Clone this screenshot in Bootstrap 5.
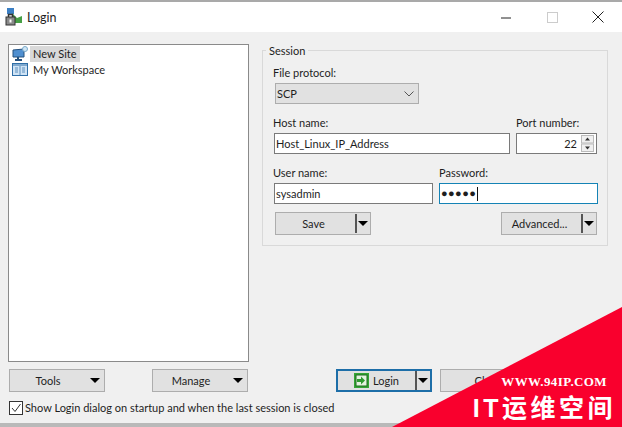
<!DOCTYPE html>
<html lang="en">
<head>
<meta charset="utf-8">
<title>Login</title>
<link href="https://cdn.jsdelivr.net/npm/bootstrap@5.3.0/dist/css/bootstrap.min.css" rel="stylesheet">
<style>
html,body{margin:0;width:622px;height:427px;overflow:hidden;background:#b9b9b9}
body{font-family:"Lato","Liberation Sans",sans-serif;font-size:11px;line-height:14px;color:#1e1e1e}
.win-shell{position:relative;width:622px;height:423px;background:#f0f0f0;border-top:2px solid #a9a9a9}
.title-bar{height:30px;background:#fff;padding-left:5px}
.title-text{font-size:12.5px;margin-left:4px;margin-top:1px}
.win-ctrls{width:121px;padding-right:18px}
.main-area{height:391px;padding:12px 13px 0 8px}
.tree-box{width:241px;height:318px;background:#fff;border:1px solid #8a8a8a;padding:1px 3px}
.tree-row{height:16px;margin-bottom:0}
.tree-label{padding:0 3px;margin-left:2px;line-height:16px}
.tree-sel{background:#d9d9d9}
.group-box{position:relative;margin-left:13px;margin-top:6px;width:346px;height:196px;border:1px solid #d9d9d9;padding:15px 9px 0 11px}
.group-title{position:absolute;left:3px;top:-7px;background:#f0f0f0;padding:0 3px}
.fld-label{height:15px;line-height:14px;margin-bottom:2px}
.first-label{margin-left:-1px}
.sel-box{width:144px;height:21px;margin-left:1px;background:#e1e1e1;border:1px solid #adadad;padding:0 4px 0 1px}
.txt-box{height:21px;background:#fff;border:1px solid #7a7a7a;padding:0 2px 0 1px;line-height:19px;display:flex;align-items:center}
.txt-box.pw-focus{border-color:#1583b5}
.caret-line{width:1px;height:14px;background:#111;margin-left:1px}
.dots{letter-spacing:.4px;font-size:11px;font-family:"Liberation Sans",sans-serif}
.host-col{width:236px}
.port-col{width:81px;margin-left:6px}
.half-col{width:159px}
.win-btn{width:96px;height:23px;background:#e1e1e1;border:1px solid #adadad;color:#1e1e1e;display:flex;align-items:center;justify-content:center;position:relative}
.split-bar{width:14px;height:19px;border-left:2px solid #555;display:flex;align-items:center;justify-content:center;flex:none}
.tri-down{width:0;height:0;border-left:5px solid transparent;border-right:5px solid transparent;border-top:5px solid #000}
.btn-lbl{flex:1;text-align:center}
.btn-pad{padding-right:1px}
.btn-pad .btn-lbl,.btn-pad2 .btn-lbl{margin-right:4px}
.btn-pad2{padding-right:4px}
.login-btn{border:2px solid #1d6ea8;padding-left:0;padding-right:1px}
.rows-gap1{margin-top:12px}
.rows-gap2{margin-top:12px}
.rows-gap3{margin-top:8px;padding:0 1px}
.bottom-rows{padding:7px 0 0 1px}
.left-btns{width:239px}
.right-btns{margin-left:88px;gap:8px}
.check-row{margin-top:8px;height:16px}
.check-sq{width:14px;height:14px;background:#fff;border:1px solid #333;margin-right:2px;flex:none;display:flex}
.wm-shape{position:absolute;right:0;bottom:-4px;width:230px;height:120px;background:#f9002d;clip-path:polygon(100% 0,100% 100%,0 100%)}
.wm-site{position:absolute;right:15px;top:67px;white-space:nowrap;color:#fff;font-family:"Liberation Serif",serif;font-weight:700;font-size:13px;line-height:16px;letter-spacing:.4px}
.wm-name{position:absolute;right:6px;top:86px;white-space:nowrap;color:#fff;font-family:"Liberation Sans","Noto Sans CJK SC",sans-serif;font-weight:700;font-size:25px;line-height:30px;letter-spacing:3.500px}
</style>
</head>
<body>
<div class="win-shell">
  <div class="title-bar d-flex align-items-center">
    <svg width="18" height="18" viewBox="0 0 18 18" aria-hidden="true"><rect x="2" y="0" width="7" height="6" fill="#3b7fc4"/><path d="M7 5l5 5 5-2v7H7z" fill="#46a045"/><rect x="1" y="9" width="9" height="8" fill="#8a8a8a" stroke="#333"/><path d="M3.500 9V6.500h4V9" fill="none" stroke="#333" stroke-width="1.500"/><rect x="4.500" y="11.500" width="2" height="3" fill="#fff"/></svg>
    <span class="title-text">Login</span>
    <div class="win-ctrls ms-auto d-flex justify-content-between align-items-center">
      <svg width="11" height="11" viewBox="0 0 11 11" aria-hidden="true"><path d="M0 6h10" stroke="#222"/></svg>
      <svg width="11" height="11" viewBox="0 0 11 11" aria-hidden="true"><rect x=".5" y=".5" width="10" height="10" fill="none" stroke="#ccc"/></svg>
      <svg width="12" height="12" viewBox="0 0 12 12" aria-hidden="true"><path d="M.5.500l11 11M11.500.500l-11 11" stroke="#222"/></svg>
    </div>
  </div>
  <div class="main-area">
    <div class="d-flex">
      <div class="tree-box">
        <div class="tree-row d-flex align-items-center">
          <svg width="16" height="16" viewBox="0 0 16 16" aria-hidden="true"><path d="M1 4l11-1v8H1z" fill="#4f8fd0" stroke="#26527f"/><path d="M6 11v2M3 14h7" stroke="#26527f" stroke-width="2"/><circle cx="13" cy="3" r="2.500" fill="#cfe6f5" stroke="#7aa9c9"/></svg>
          <span class="tree-label tree-sel">New Site</span>
        </div>
        <div class="tree-row d-flex align-items-center">
          <svg width="16" height="16" viewBox="0 0 16 16" aria-hidden="true"><rect x=".5" y="1.500" width="15" height="12" fill="#cfe3f5" stroke="#2f6fa8"/><path d="M1 3h14" stroke="#2f6fa8"/><path d="M8 4v9M3 6h3M3 8h3M3 10h3M10 6h3M10 8h3M10 10h3" stroke="#5c8fbc"/></svg>
          <span class="tree-label">My Workspace</span>
        </div>
      </div>
      <div class="group-box">
        <span class="group-title">Session</span>
        <div class="fld-label first-label">File protocol:</div>
        <div class="sel-box d-flex align-items-center justify-content-between">
          <span>SCP</span>
          <svg width="10" height="6" viewBox="0 0 10 6" aria-hidden="true"><path d="M.5.500L5 5 9.500.500" fill="none" stroke="#555"/></svg>
        </div>
        <div class="d-flex rows-gap1">
          <div class="host-col">
            <div class="fld-label first-label">Host name:</div>
            <div class="txt-box">Host_Linux_IP_Address</div>
          </div>
          <div class="port-col">
            <div class="fld-label">Port number:</div>
            <div class="txt-box justify-content-end">22
              <svg class="ms-1" width="13" height="17" viewBox="0 0 13 17" aria-hidden="true"><rect x=".5" y=".5" width="12" height="7.500" fill="#f0f0f0" stroke="#bbb"/><rect x=".5" y="9" width="12" height="7.500" fill="#f0f0f0" stroke="#bbb"/><path d="M4 5.500l2.500-3 2.500 3zM4 11.500l2.500 3 2.500-3z" fill="#333"/></svg>
            </div>
          </div>
        </div>
        <div class="d-flex rows-gap2">
          <div class="half-col">
            <div class="fld-label first-label">User name:</div>
            <div class="txt-box">sysadmin</div>
          </div>
          <div class="half-col ms-auto">
            <div class="fld-label">Password:</div>
            <div class="txt-box pw-focus"><span class="dots">●●●●●</span><span class="caret-line"></span></div>
          </div>
        </div>
        <div class="d-flex justify-content-between rows-gap3">
          <div class="win-btn btn-pad"><span class="btn-lbl">Save</span><span class="split-bar"><span class="tri-down"></span></span></div>
          <div class="win-btn btn-pad"><span class="btn-lbl">Advanced...</span><span class="split-bar"><span class="tri-down"></span></span></div>
        </div>
      </div>
    </div>
    <div class="bottom-rows">
      <div class="d-flex">
        <div class="left-btns d-flex justify-content-between">
          <div class="win-btn btn-pad2"><span class="btn-lbl">Tools</span><span class="tri-down"></span></div>
          <div class="win-btn btn-pad2"><span class="btn-lbl">Manage</span><span class="tri-down"></span></div>
        </div>
        <div class="right-btns d-flex">
          <div class="win-btn login-btn">
            <span class="btn-lbl d-flex align-items-center justify-content-center gap-1">
              <svg width="15" height="15" viewBox="0 0 15 15" aria-hidden="true"><rect width="15" height="15" fill="#35a535"/><rect x="2" y="2" width="11" height="11" fill="#e4f3df" stroke="#1f6b1f"/><path d="M3 6h4V3.500l4 4-4 4V9H3z" fill="#2f9a2f"/></svg>Login</span>
            <span class="split-bar"><span class="tri-down"></span></span>
          </div>
          <div class="win-btn"><span class="btn-lbl">Close</span></div>
        </div>
      </div>
      <div class="check-row d-flex align-items-center">
        <span class="check-sq"><svg width="12" height="12" viewBox="0 0 12 12" aria-hidden="true"><path d="M2 6l3 3.500L10.500 2" fill="none" stroke="#333"/></svg></span>
        <span>Show Login dialog on startup and when the last session is closed</span>
      </div>
    </div>
  </div>
  <div class="wm-shape">
    <div class="wm-site">WWW.94IP.COM</div>
    <div class="wm-name">IT运维空间</div>
  </div>
</div>
</body>
</html>
